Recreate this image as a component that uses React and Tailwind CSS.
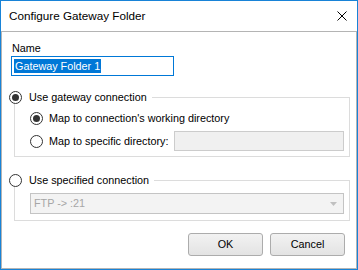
import React from 'react';

function Radio({ checked }) {
  return (
    <span className="flex h-[13px] w-[13px] shrink-0 items-center justify-center rounded-full border border-[#333333] bg-white">
      {checked && <span className="h-[7px] w-[7px] rounded-full bg-[#333333]" />}
    </span>
  );
}

function GroupBox({ label, checked, className, children }) {
  return (
    <div className={`relative ml-[12px] w-[336px] border border-[#dcdcdc] ${className}`}>
      <div className="absolute left-[-7px] top-[-7px] flex h-[13px] items-center gap-[7px] bg-white pl-[1px] pr-[5px]">
        <Radio checked={checked} />
        <span className="whitespace-nowrap leading-[13px]">{label}</span>
      </div>
      {children}
    </div>
  );
}

export default function App() {
  return (
    <div
      className="flex h-[270px] w-[358px] flex-col border border-[#1883d7] bg-white text-[10.8px] text-black"
      style={{ fontFamily: '"Liberation Sans", Arial, sans-serif' }}
    >
      <div className="flex h-[30px] shrink-0 items-center justify-between pl-[8px] pr-[10px]">
        <span className="text-[11.7px]">Configure Gateway Folder</span>
        <svg width="10" height="10" viewBox="0 0 10 10">
          <path d="M0.5 0.5 L9.5 9.5 M9.5 0.5 L0.5 9.5" stroke="#000" strokeWidth="1" fill="none" />
        </svg>
      </div>
      <div className="flex flex-1 flex-col border border-[#b4b4b4]">
        <div className="ml-[10px] mt-[8px] h-[16px] leading-[16px]">Name</div>
        <div className="ml-[9px] flex h-[20px] w-[163px] items-center border border-[#0078d7] pl-[2px]">
          <span className="whitespace-nowrap bg-[#0078d7] px-[1px] leading-[14px] text-white">Gateway Folder 1</span>
        </div>

        <GroupBox label="Use gateway connection" checked className="mt-[21px] h-[60px]">
          <div className="flex flex-col gap-[3px] pl-[15px] pt-[10px]">
            <div className="flex h-[20px] items-center gap-[6px]">
              <Radio checked />
              <span className="whitespace-nowrap">Map to connection's working directory</span>
            </div>
            <div className="flex h-[20px] items-center">
              <Radio />
              <span className="ml-[6px] whitespace-nowrap">Map to specific directory:</span>
              <div className="ml-auto mr-[5px] h-[20px] w-[170px] shrink-0 border border-[#cccccc] bg-[#f0f0f0]" />
            </div>
          </div>
        </GroupBox>

        <GroupBox label="Use specified connection" className="mt-[23px] h-[41px]">
          <div className="ml-[15px] mt-[12px] flex h-[21px] w-[314px] items-center justify-between border border-[#c4c4c4] bg-[#f3f3f3] pl-[3px] pr-[6px] text-[#a6a6a6]">
            <span>FTP -&gt; :21</span>
            <svg width="7" height="4" viewBox="0 0 7 4">
              <path d="M0 0 L7 0 L3.5 4 Z" fill="#c0c0c0" />
            </svg>
          </div>
        </GroupBox>

        <div className="mr-[11px] mt-[12px] flex justify-end gap-[7px]">
          <button className="h-[23px] w-[75px] rounded-[3px] border border-[#acacac] bg-gradient-to-b from-[#f2f2f2] to-[#e3e3e3]">
            OK
          </button>
          <button className="h-[23px] w-[75px] rounded-[3px] border border-[#acacac] bg-gradient-to-b from-[#f2f2f2] to-[#e3e3e3]">
            Cancel
          </button>
        </div>
      </div>
    </div>
  );
}
